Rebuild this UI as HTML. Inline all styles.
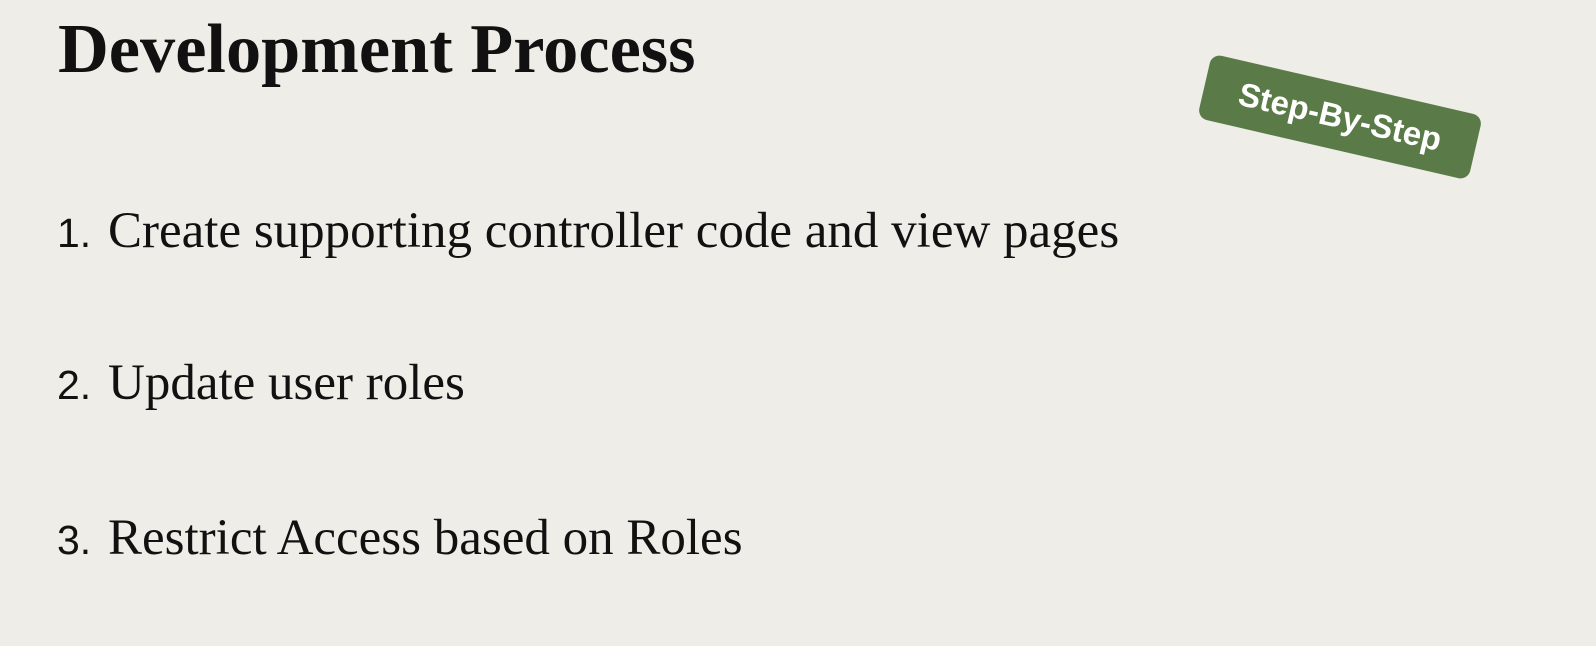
<!DOCTYPE html>
<html><head><meta charset="utf-8"><style>
html,body{margin:0;padding:0}
body{width:1596px;height:646px;overflow:hidden;background:#eeede8;position:relative;font-family:"Liberation Serif",serif;color:#111}
.title{position:absolute;left:58px;top:10px;font-weight:bold;font-size:70px;line-height:80px;transform:scaleX(1.005);transform-origin:left top;letter-spacing:0px;white-space:nowrap}
.item{position:absolute;left:57px;font-size:51px;line-height:56px;white-space:nowrap}
.item .n{font-family:"Liberation Sans",sans-serif;font-size:41px;display:inline-block;width:51px}
.badge{position:absolute;left:1201px;top:84px;width:278px;height:66px;background:#5a7a47;border-radius:10px;transform:rotate(13deg);transform-origin:center;color:#fff;font-family:"Liberation Sans",sans-serif;font-weight:bold;font-size:33px;line-height:66px;text-align:center}
</style></head><body>
<div class="title">Development Process</div>
<div class="badge">Step-By-Step</div>
<div class="item" style="top:203px"><span class="n">1.</span>Create supporting controller code and view pages</div>
<div class="item" style="top:355px"><span class="n">2.</span>Update user roles</div>
<div class="item" style="top:510px"><span class="n">3.</span>Restrict Access based on Roles</div>
</body></html>
